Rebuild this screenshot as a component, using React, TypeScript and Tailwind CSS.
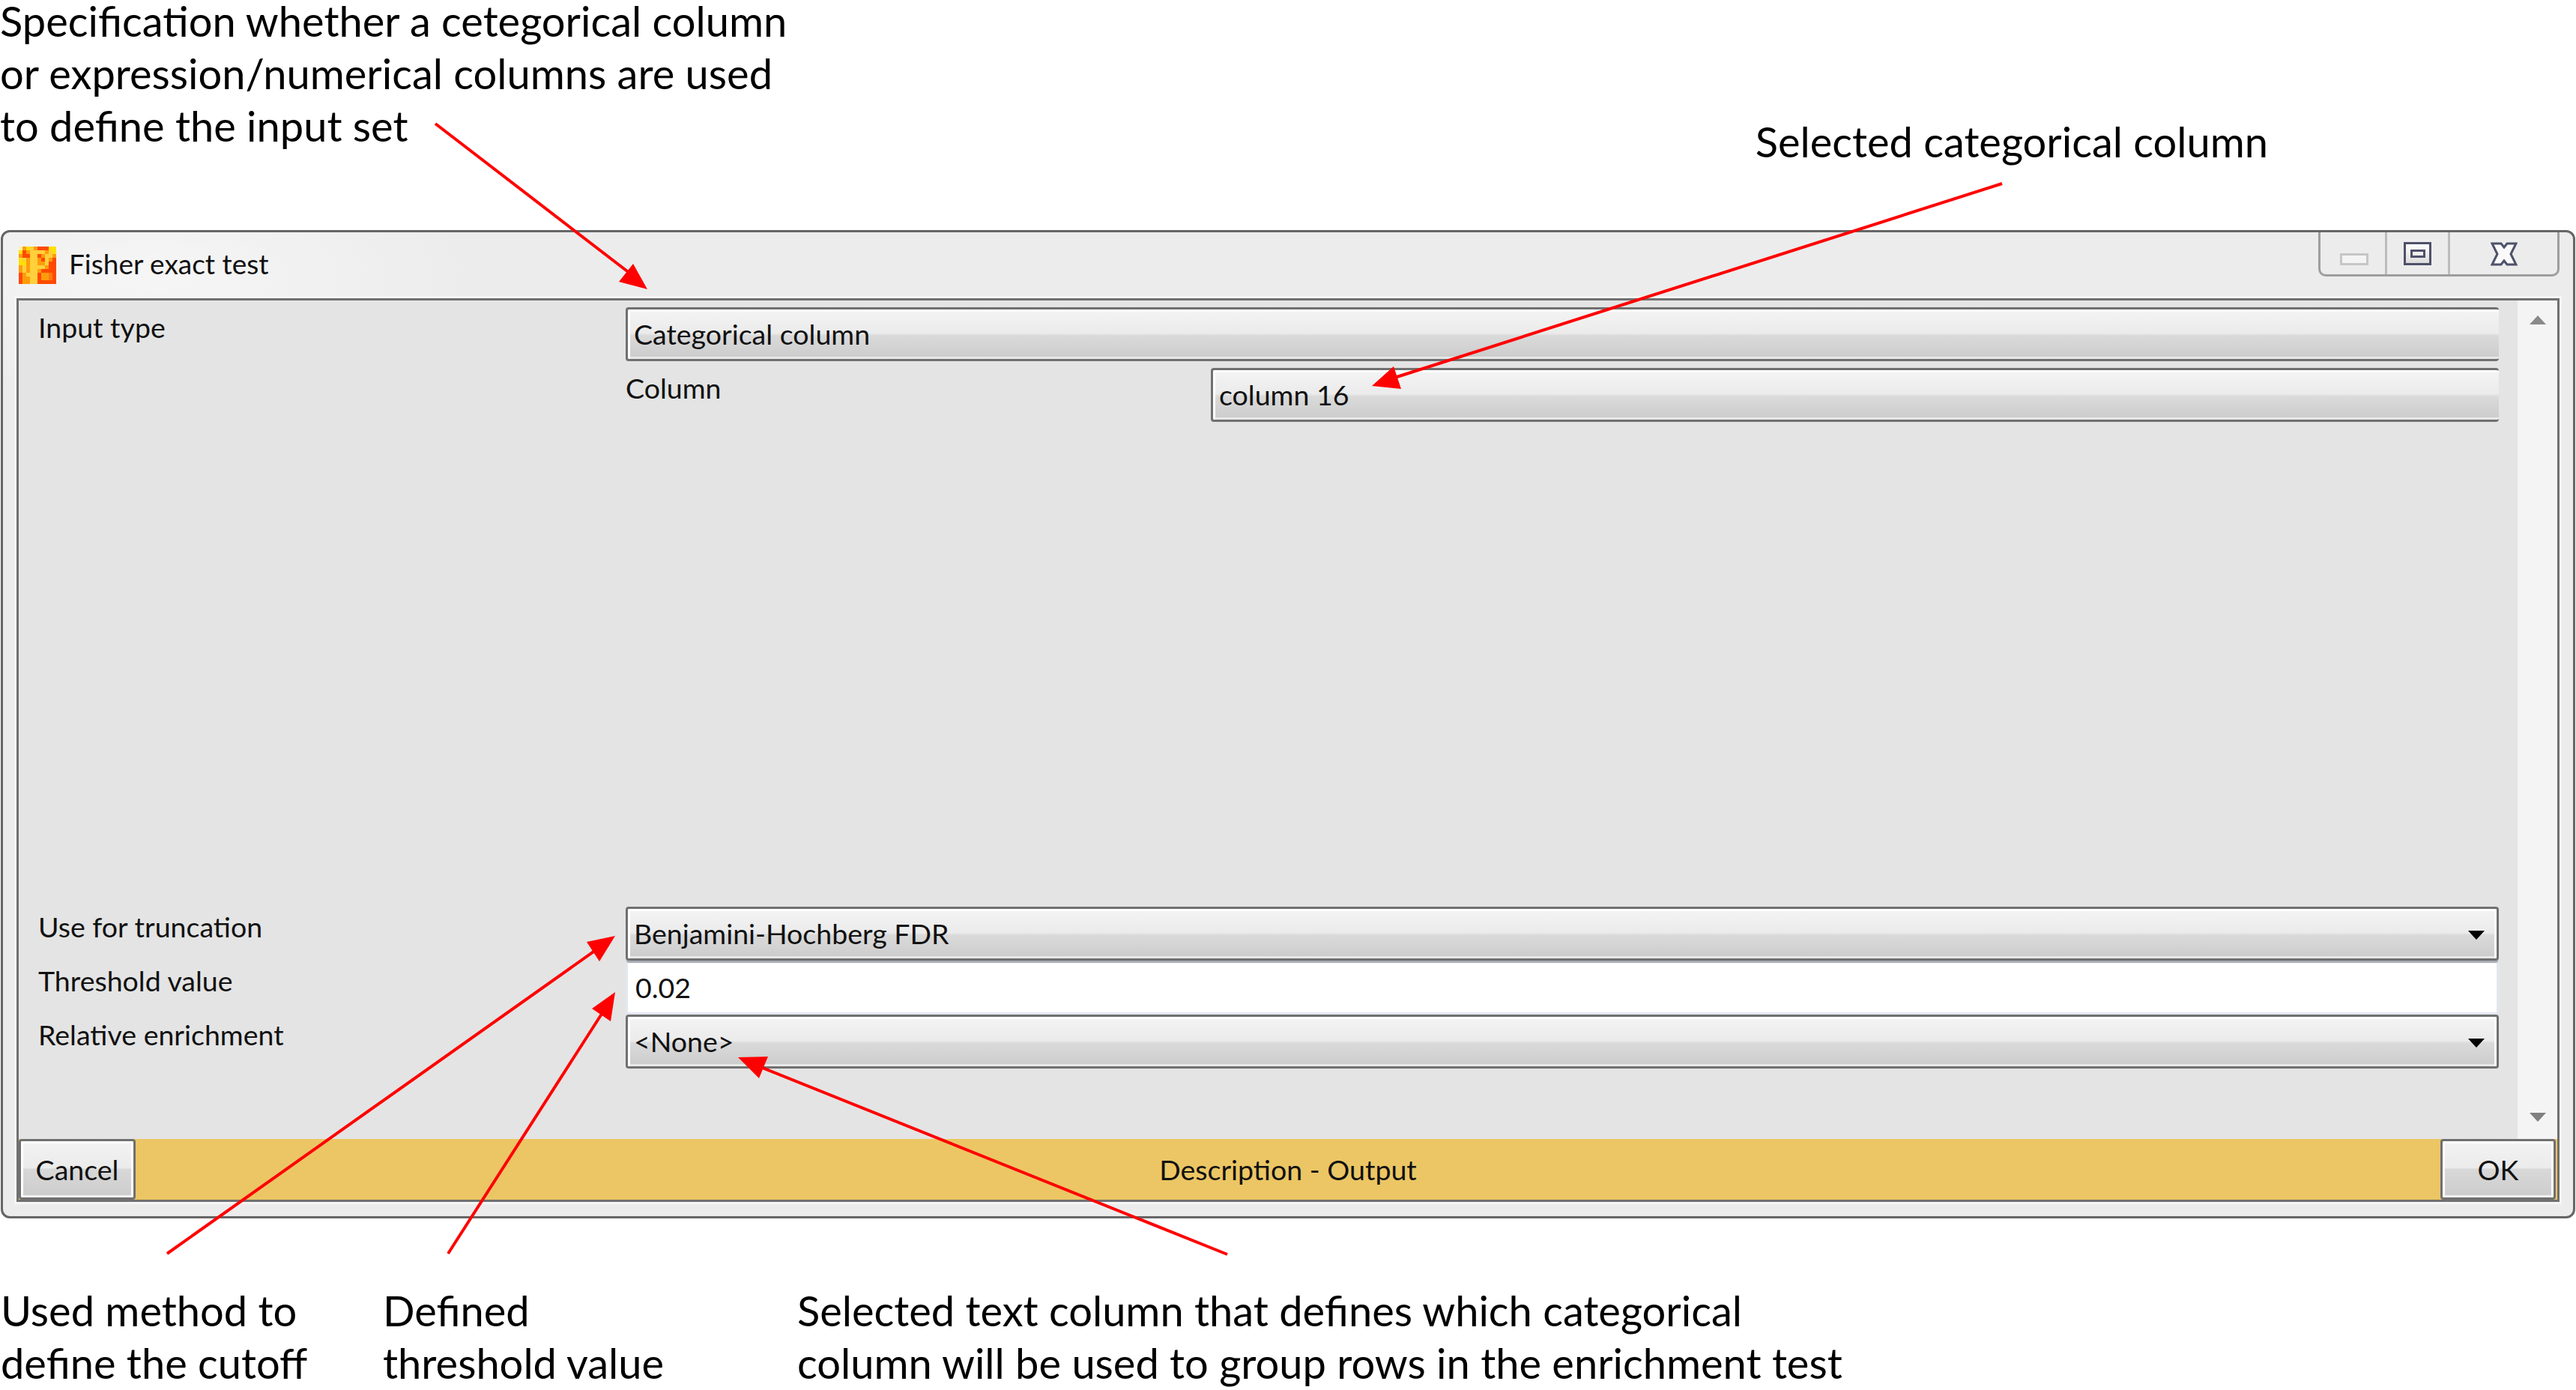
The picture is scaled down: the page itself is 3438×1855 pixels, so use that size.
const note = 'font-["Lato",sans-serif] text-[56px] leading-[70px] text-black'
const ui = 'font-["Lato",sans-serif] text-[37.5px] leading-[44px] text-[#111]'
const combo =
  'flex h-[72px] items-start rounded-[4px] border-[3px] border-[#707070] bg-[linear-gradient(#fff_0,#fff_3px,#f3f3f3_3px,#ebebeb_32px,#e4e4e4_33px,#dadada_35px,#cdcdcd_63px,#e8e8e8_63px)]'
const button =
  'flex h-full items-center justify-center rounded-[4px] border-[3px] border-[#707070] bg-[linear-gradient(#fff_0,#fff_3px,#f2f2f2_3px,#ebebeb_36px,#d8d8d8_37px,#cdcdcd_72px,#f2f2f2_72px)] shadow-[inset_3px_0_0_#fff,inset_-3px_0_0_#fff]'

const iconRows = [
  'woyaorrryy',
  'yroaaaaoay',
  'orraaroaao',
  'yaoaaoraor',
  'yyoaaooarr',
  'oaoaaaaorr',
  'oaoaaorrrr',
  'roaaarooOr',
  'rooaarooOr',
  'rooaarrrrr',
]
const iconColors: Record<string, string> = {
  w: '#fff4a8',
  y: '#ffe000',
  a: '#ffcf3c',
  o: '#ff9c0a',
  O: '#ff7a10',
  r: '#ff4a00',
}

const AppIcon = () => (
  <svg width="50" height="50" viewBox="0 0 10 10" shapeRendering="crispEdges">
    {iconRows.map((row, y) =>
      row.split('').map((c, x) => (
        <rect key={`${x}-${y}`} x={x} y={y} width="1" height="1" fill={iconColors[c]} />
      )),
    )}
  </svg>
)

const Triangle = ({ up, fill }: { up?: boolean; fill: string }) => (
  <svg width="22" height="12" viewBox="0 0 22 12">
    <polygon points={up ? '11,0 22,12 0,12' : '0,0 22,0 11,12'} fill={fill} />
  </svg>
)

const WindowControls = () => (
  <div className="flex h-[59px] w-[322px] rounded-b-[10px] border-x-[3px] border-b-[3px] border-[#9e9e9e]">
    <div className="flex w-[86px] justify-center pt-[28px] pl-[3px]">
      <div className="h-[16px] w-[38px] border-[3px] border-[#c6c6c6] bg-[#f4f4f4]" />
    </div>
    <div className="flex w-[84px] justify-center border-l-[3px] border-[#bcbcbc] pt-[13px]">
      <div className="flex h-[31px] w-[37px] items-center justify-center border-[3px] border-[#4e5169] bg-[linear-gradient(#fff,#dcdcdc)]">
        <div className="h-[11px] w-[20px] border-[3px] border-[#4e5169]" />
      </div>
    </div>
    <div className="flex flex-1 justify-center border-l-[3px] border-[#bcbcbc] pt-[13px]">
      <svg width="36" height="32" viewBox="0 0 36 32">
        <polygon
          points="2,2 14,2 18,7 22,2 34,2 27,16 34,30 22,30 18,25 14,30 2,30 9,16"
          fill="#fafafa"
          stroke="#4e5169"
          strokeWidth="3"
        />
      </svg>
    </div>
  </div>
)

const Combo = ({ text, arrow }: { text: string; arrow?: boolean }) => (
  <div
    className={`${combo} ${arrow ? 'shadow-[inset_3px_0_0_#fff,inset_-3px_0_0_#fff]' : 'border-r-0 shadow-[inset_3px_0_0_#fff]'}`}
  >
    <span className={`${ui} pt-[11px] pl-[8px]`}>{text}</span>
    {arrow && (
      <span className="mt-[29px] mr-[16px] ml-auto">
        <Triangle fill="#000" />
      </span>
    )}
  </div>
)

const Label = ({ text }: { text: string }) => (
  <div className={`${ui} h-[72px] pt-[5px] pl-[26px]`}>{text}</div>
)

const Arrow = ({ line, head }: { line: string; head: string }) => (
  <>
    <polyline points={line} stroke="#ff0000" strokeWidth="4" fill="none" />
    <polygon points={head} fill="#ff0000" />
  </>
)

export default function App() {
  return (
    <div className="relative flex h-[1855px] w-[3438px] flex-col overflow-hidden bg-white">
      {/* notes above the dialog */}
      <div className="flex h-[307px] shrink-0 items-start justify-between">
        <div className='flex flex-col gap-[14px] font-["Lato",sans-serif] text-[56px] leading-[56px] text-black'>
          <p>Specification whether a cetegorical column</p>
          <p>or expression/numerical columns are used</p>
          <p>to define the input set</p>
        </div>
        <p className={`${note} mt-[154px] mr-[411px]`}>Selected categorical column</p>
      </div>

      {/* dialog */}
      <div className="mx-px flex h-[1319px] shrink-0 flex-col rounded-[12px] border-[3px] border-[#666] bg-[radial-gradient(ellipse_at_200px_60px,#f6f6f6_0,#ececec_420px)]">
        <div className="flex h-[88px] shrink-0 items-start pr-[18px] pl-[21px]">
          <div className="mt-[19px]">
            <AppIcon />
          </div>
          <span className='mt-[20px] ml-[17px] font-["Lato",sans-serif] text-[37px] leading-[44px] text-[#111]'>
            Fisher exact test
          </span>
          <div className="ml-auto">
            <WindowControls />
          </div>
        </div>

        <div className="mx-[18px] flex h-[1206px] shrink-0 flex-col border-[3px] border-[#707070] bg-[#e4e4e4] shadow-[0_0_0_3px_#f6f6f6]">
          <div className="flex h-[1119px] shrink-0">
            <div className="flex flex-1 flex-col justify-between pt-[9px] pr-[25px] pb-[94px]">
              <div className="grid grid-cols-[810px_1fr]">
                <Label text="Input type" />
                <div className="flex flex-col gap-[9px]">
                  <Combo text="Categorical column" />
                  <div className="grid grid-cols-[781px_1fr]">
                    <span className={`${ui} pt-[5px]`}>Column</span>
                    <Combo text="column 16" />
                  </div>
                </div>
              </div>

              <div className="grid grid-cols-[810px_1fr]">
                <Label text="Use for truncation" />
                <Combo text="Benjamini-Hochberg FDR" arrow />
                <Label text="Threshold value" />
                <div className="h-[72px] border-[3px] border-[#e3e7ee] border-t-[#abaeb8] bg-white">
                  <span className={`${ui} block pt-[11px] pl-[10px]`}>0.02</span>
                </div>
                <Label text="Relative enrichment" />
                <Combo text="<None>" arrow />
              </div>
            </div>
            <div className="flex w-[53px] flex-col items-center justify-between bg-[#f4f4f4] pt-[20px] pb-[23px]">
              <Triangle up fill="#8a8a8a" />
              <Triangle fill="#808080" />
            </div>
          </div>

          <div className="flex h-[81px] shrink-0 items-center justify-between bg-[#ecc664] pr-[2px]">
            <div className={`${button} ${ui} w-[156px]`}>Cancel</div>
            <span className={ui}>Description - Output</span>
            <div className={`${button} ${ui} w-[154px]`}>OK</div>
          </div>
        </div>
      </div>

      {/* notes below the dialog */}
      <div className={`${note} flex pt-[88px] pl-[1px]`}>
        <div className="w-[510px]">
          <p>Used method to</p>
          <p>define the cutoff</p>
        </div>
        <div className="w-[553px]">
          <p>Defined</p>
          <p>threshold value</p>
        </div>
        <div>
          <p>Selected text column that defines which categorical</p>
          <p>column will be used to group rows in the enrichment test</p>
        </div>
      </div>

      {/* callout arrows */}
      <svg className="pointer-events-none absolute inset-0" width="3438" height="1855">
        <Arrow line="581,165 845,368" head="864,386 845,352 826,376" />
        <Arrow line="2672,245 1855,506" head="1831,515 1860,489 1870,519" />
        <Arrow line="223,1673 795,1268" head="821,1249 783,1257 800,1283" />
        <Arrow line="598,1673 805,1350" head="821,1324 790,1346 815,1363" />
        <Arrow line="1638,1674 1010,1422" head="985,1411 1025,1410 1013,1439" />
      </svg>
    </div>
  )
}
